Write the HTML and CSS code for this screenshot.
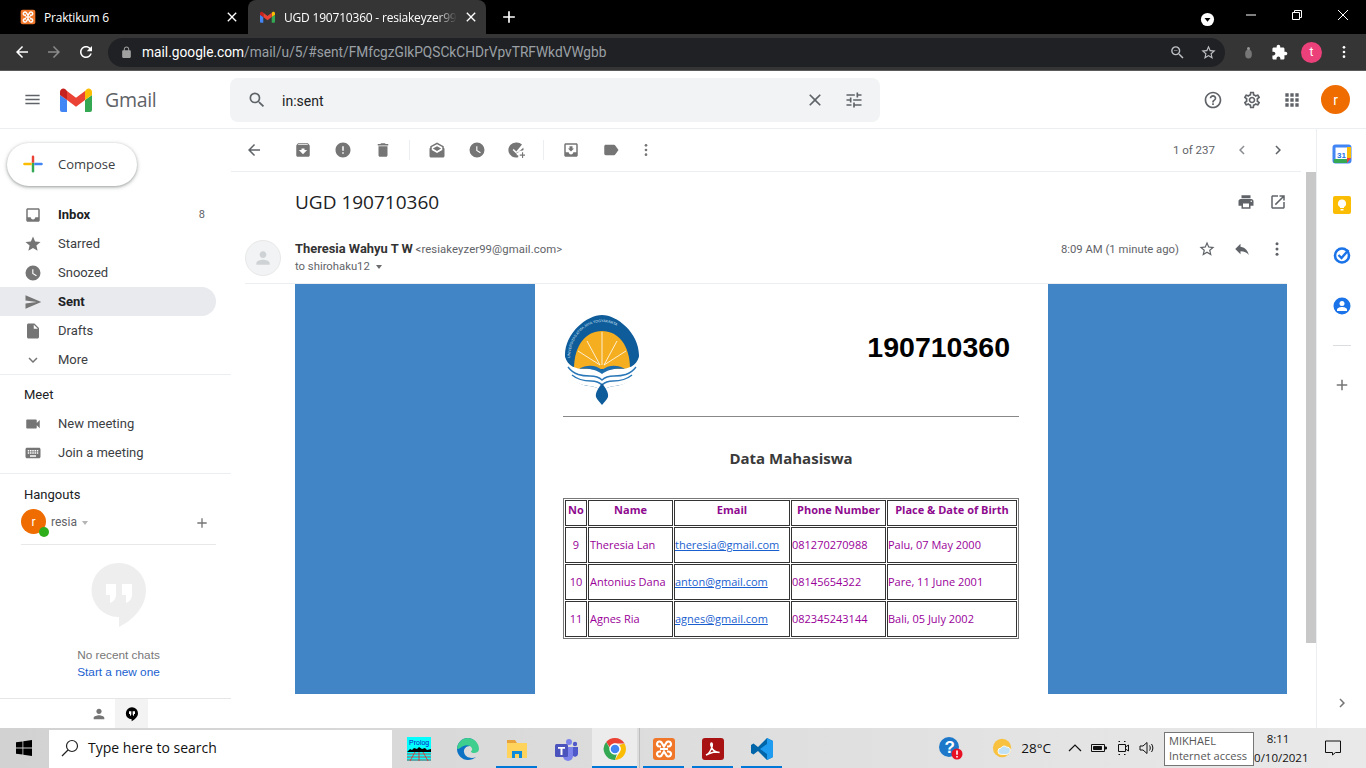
FILE: index.html
```html
<!DOCTYPE html>
<html lang="en">
<head>
  <meta charset="UTF-8">
  <title>UGD 190710360 - Gmail</title>
  <link rel="stylesheet" href="styles.css">
</head>
<body>
  <svg class="defs">
    <symbol id="gmail-m" viewBox="0 0 32 24">
      <path fill="#4285f4" d="M2 24h5V12L0 7v15a2 2 0 0 0 2 2z"/>
      <path fill="#34a853" d="M25 24h5a2 2 0 0 0 2-2V7l-7 5z"/>
      <path fill="#fbbc04" d="M25 3v9l7-5V4c0-2.800-3.200-4.400-5.400-2.700z"/>
      <path fill="#ea4335" d="M7 12V3l9 6.750L25 3v9l-9 6.750z"/>
      <path fill="#c5221f" d="M0 4v3l7 5V3L5.400 1.300C3.200-.4 0 1.200 0 4z"/>
    </symbol>
    <symbol id="xampp" viewBox="0 0 24 24">
      <rect x="1" y="1" width="22" height="22" rx="3" fill="#f0762a"/>
      <path fill="none" stroke="#fff" stroke-width="2.200" d="M9 9.500H7.500a2.500 2.500 0 1 1 2-4l2.500 4 2.500-4a2.500 2.500 0 1 1 2 4H15M9 14.500H7.500a2.500 2.500 0 1 0 2 4l2.500-4 2.500 4a2.500 2.500 0 1 0 2-4H15M8 12h8"/>
    </symbol>
    <symbol id="dots" viewBox="0 0 24 24"><circle cx="12" cy="5" r="2"/><circle cx="12" cy="12" r="2"/><circle cx="12" cy="19" r="2"/></symbol>
    <symbol id="person" viewBox="0 0 24 24"><path d="M12 12c2.210 0 4-1.790 4-4s-1.790-4-4-4-4 1.790-4 4 1.790 4 4 4zm0 2c-2.670 0-8 1.340-8 4v2h16v-2c0-2.660-5.330-4-8-4z"/></symbol>
  </svg>

  <!-- browser chrome -->
  <div class="tabstrip">
    <div class="tab">
      <svg class="favicon"><use href="#xampp"/></svg>
      <span class="tab-title">Praktikum 6</span>
      <svg class="tab-close" viewBox="0 0 24 24"><path d="M19 6.410L17.590 5 12 10.590 6.410 5 5 6.410 10.590 12 5 17.590 6.410 19 12 13.410 17.590 19 19 17.590 13.410 12z"/></svg>
    </div>
    <div class="tab tab-active">
      <svg class="favicon favicon-m"><use href="#gmail-m"/></svg>
      <span class="tab-title tab-fade">UGD 190710360 - resiakeyzer99@gmail.com</span>
      <svg class="tab-close" viewBox="0 0 24 24"><path d="M19 6.410L17.590 5 12 10.590 6.410 5 5 6.410 10.590 12 5 17.590 6.410 19 12 13.410 17.590 19 19 17.590 13.410 12z"/></svg>
    </div>
    <svg class="new-tab" viewBox="0 0 24 24"><path d="M19 13h-6v6h-2v-6H5v-2h6V5h2v6h6v2z"/></svg>
    <div class="window-ctrls">
      <svg class="tab-search" viewBox="0 0 16 16"><circle cx="8" cy="8" r="7" fill="#fff"/><path d="M4.800 6.500h6.400L8 10.500z" fill="#000"/></svg>
      <span class="win-btn"><svg viewBox="0 0 10 10"><path d="M0 5h10" stroke="#fff"/></svg></span>
      <span class="win-btn"><svg viewBox="0 0 10 10" fill="none" stroke="#fff"><path d="M.5 2.500h7v7h-7zM2.500 2.500v-2h7v7h-2"/></svg></span>
      <span class="win-btn"><svg viewBox="0 0 10 10"><path d="M0 0l10 10M10 0L0 10" stroke="#fff"/></svg></span>
    </div>
  </div>

  <div class="browser-bar">
    <svg class="nav-ico" viewBox="0 0 24 24"><path d="M20 11H7.830l5.590-5.590L12 4l-8 8 8 8 1.410-1.410L7.830 13H20v-2z"/></svg>
    <svg class="nav-ico nav-off" viewBox="0 0 24 24"><path d="M12 4l-1.410 1.410L16.170 11H4v2h12.170l-5.580 5.590L12 20l8-8z"/></svg>
    <svg class="nav-ico" viewBox="0 0 24 24"><path d="M17.650 6.350C16.200 4.900 14.210 4 12 4c-4.420 0-7.990 3.580-7.990 8s3.570 8 7.990 8c3.730 0 6.840-2.550 7.730-6h-2.080c-.82 2.330-3.040 4-5.650 4-3.310 0-6-2.690-6-6s2.690-6 6-6c1.660 0 3.140.69 4.220 1.780L13 11h7V4l-2.350 2.350z"/></svg>
    <div class="omnibox">
      <svg class="lock" viewBox="0 0 24 24"><path d="M18 8h-1V6c0-2.760-2.240-5-5-5S7 3.240 7 6v2H6c-1.100 0-2 .9-2 2v10c0 1.100.9 2 2 2h12c1.100 0 2-.9 2-2V10c0-1.100-.9-2-2-2zM15.100 8H8.900V6c0-1.710 1.390-3.100 3.100-3.100 1.710 0 3.100 1.390 3.100 3.100v2z"/></svg>
      <span class="url"><b>mail.google.com</b>/mail/u/5/#sent/FMfcgzGlkPQSCkCHDrVpvTRFWkdVWgbb</span>
      <svg class="omni-ico" viewBox="0 0 24 24"><path d="M15.500 14h-.79l-.28-.27A6.471 6.471 0 0 0 16 9.500 6.500 6.500 0 1 0 9.500 16c1.610 0 3.090-.59 4.230-1.570l.27.28v.79l5 4.990L20.490 19l-4.990-5zm-6 0C7.010 14 5 11.990 5 9.500S7.010 5 9.500 5 14 7.010 14 9.500 11.990 14 9.500 14zM7 9h5v1H7z"/></svg>
      <svg class="omni-ico" viewBox="0 0 24 24"><path d="M22 9.240l-7.190-.62L12 2 9.190 8.630 2 9.240l5.460 4.730L5.820 21 12 17.270 18.180 21l-1.630-7.030L22 9.240zM12 15.400l-3.760 2.270 1-4.280-3.320-2.880 4.380-.38L12 6.100l1.710 4.040 4.380.38-3.320 2.880 1 4.280L12 15.400z"/></svg>
    </div>
    <svg class="ext-bug" viewBox="0 0 12 18"><ellipse cx="6" cy="11" rx="4.500" ry="6" fill="#777"/><circle cx="6" cy="3.500" r="2" fill="#999"/></svg>
    <svg class="ext-ico" viewBox="0 0 24 24"><path d="M20.500 11H19V7c0-1.100-.9-2-2-2h-4V3.500C13 2.120 11.880 1 10.500 1S8 2.120 8 3.500V5H4c-1.100 0-1.990.9-1.990 2v3.800H3.500c1.490 0 2.700 1.210 2.700 2.700s-1.210 2.700-2.700 2.700H2V20c0 1.100.9 2 2 2h3.800v-1.500c0-1.490 1.210-2.700 2.700-2.700 1.490 0 2.700 1.210 2.700 2.700V22H17c1.100 0 2-.9 2-2v-4h1.500c1.380 0 2.500-1.120 2.500-2.500S21.880 11 20.500 11z"/></svg>
    <span class="profile-t">t</span>
    <svg class="ext-dots"><use href="#dots"/></svg>
  </div>

  <!-- gmail header -->
  <header class="gm-header">
    <svg class="gm-menu" viewBox="0 0 24 24"><path d="M3 18h18v-2H3v2zm0-5h18v-2H3v2zm0-7v2h18V6H3z"/></svg>
    <svg class="gm-logo"><use href="#gmail-m"/></svg>
    <span class="gm-word">Gmail</span>
    <div class="searchbar">
      <svg class="ico ico-search" viewBox="0 0 24 24"><path d="M15.500 14h-.79l-.28-.27A6.471 6.471 0 0 0 16 9.500 6.500 6.500 0 1 0 9.500 16c1.610 0 3.090-.59 4.230-1.570l.27.28v.79l5 4.990L20.490 19l-4.990-5zm-6 0C7.010 14 5 11.990 5 9.500S7.010 5 9.500 5 14 7.010 14 9.500 11.990 14 9.500 14z"/></svg>
      <span class="search-text">in:sent</span>
      <svg class="ico ico-clear" viewBox="0 0 24 24"><path d="M19 6.410L17.590 5 12 10.590 6.410 5 5 6.410 10.590 12 5 17.590 6.410 19 12 13.410 17.590 19 19 17.590 13.410 12z"/></svg>
      <svg class="ico ico-tune" viewBox="0 0 24 24"><path d="M3 17v2h6v-2H3zM3 5v2h10V5H3zm10 16v-2h8v-2h-8v-2h-2v6h2zM7 9v2H3v2h4v2h2V9H7zm14 4v-2H11v2h10zm-6-4h2V7h4V5h-4V3h-2v6z"/></svg>
    </div>
    <div class="gm-actions">
      <svg class="ico" viewBox="0 0 24 24"><path d="M11 18h2v-2h-2v2zm1-16C6.480 2 2 6.480 2 12s4.480 10 10 10 10-4.480 10-10S17.520 2 12 2zm0 18c-4.410 0-8-3.590-8-8s3.590-8 8-8 8 3.590 8 8-3.590 8-8 8zm0-14c-2.210 0-4 1.790-4 4h2c0-1.100.9-2 2-2s2 .9 2 2c0 2-3 1.750-3 5h2c0-2.250 3-2.500 3-5 0-2.210-1.790-4-4-4z"/></svg>
      <svg class="ico" viewBox="0 0 24 24"><path d="M19.430 12.980c.04-.32.07-.64.07-.98 0-.34-.03-.66-.07-.98l2.110-1.650c.19-.15.24-.42.12-.64l-2-3.460c-.09-.16-.26-.25-.44-.25-.06 0-.12.01-.17.03l-2.490 1c-.52-.4-1.080-.73-1.690-.98l-.38-2.650C14.460 2.180 14.250 2 14 2h-4c-.25 0-.46.18-.49.42l-.38 2.650c-.61.25-1.170.59-1.690.98l-2.490-1c-.06-.02-.12-.03-.18-.03-.17 0-.34.09-.43.25l-2 3.460c-.13.22-.07.49.12.64l2.110 1.650c-.04.32-.07.65-.07.98 0 .33.03.66.07.98l-2.110 1.650c-.19.15-.24.42-.12.64l2 3.460c.09.16.26.25.44.25.06 0 .12-.01.17-.03l2.490-1c.52.4 1.080.73 1.690.98l.38 2.650c.03.24.24.42.49.42h4c.25 0 .46-.18.49-.42l.38-2.650c.61-.25 1.170-.59 1.690-.98l2.490 1c.06.02.12.03.18.03.17 0 .34-.09.43-.25l2-3.460c.12-.22.07-.49-.12-.64l-2.110-1.650zm-1.980-1.710c.04.31.05.52.05.73 0 .21-.02.43-.05.73l-.14 1.130.89.7 1.080.84-.7 1.210-1.270-.51-1.040-.42-.9.68c-.43.32-.84.56-1.250.73l-1.060.43-.16 1.130-.2 1.350h-1.400l-.19-1.350-.16-1.130-1.060-.43c-.43-.18-.83-.41-1.230-.71l-.91-.7-1.060.43-1.270.51-.7-1.210 1.080-.84.89-.7-.14-1.130c-.03-.31-.05-.54-.05-.74s.02-.43.05-.73l.14-1.130-.89-.7-1.080-.84.7-1.210 1.270.51 1.040.42.9-.68c.43-.32.84-.56 1.250-.73l1.060-.43.16-1.130.2-1.350h1.390l.19 1.350.16 1.130 1.060.43c.43.18.83.41 1.230.71l.91.7 1.060-.43 1.270-.51.7 1.210-1.070.85-.89.7.14 1.130zM12 8c-2.210 0-4 1.790-4 4s1.790 4 4 4 4-1.790 4-4-1.790-4-4-4zm0 6c-1.100 0-2-.9-2-2s.9-2 2-2 2 .9 2 2-.9 2-2 2z"/></svg>
      <svg class="ico" viewBox="0 0 24 24"><path d="M4 8h4V4H4v4zm6 12h4v-4h-4v4zm-6 0h4v-4H4v4zm0-6h4v-4H4v4zm6 0h4v-4h-4v4zm6-10v4h4V4h-4zm-6 4h4V4h-4v4zm6 6h4v-4h-4v4zm0 6h4v-4h-4v4z"/></svg>
      <span class="gm-avatar">r</span>
    </div>
  </header>

  <div class="gm-body">
    <aside class="sidebar">
      <div class="compose">
        <svg class="compose-plus" viewBox="0 0 36 36">
          <path fill="#34a853" d="M16 16h4v14a2 2 0 0 1-4 0z"/>
          <path fill="#4285f4" d="M20 16h12a2 2 0 0 1 0 4H20z"/>
          <path fill="#fbbc04" d="M4 16h12v4H4a2 2 0 0 1 0-4z"/>
          <path fill="#ea4335" d="M16 6a2 2 0 0 1 4 0v10h-4z"/>
        </svg>
        <span>Compose</span>
      </div>

      <nav class="nav-list">
        <div class="nav-row nav-strong">
          <svg viewBox="0 0 24 24"><path d="M19 3H4.990c-1.110 0-1.980.9-1.980 2L3 19c0 1.100.88 2 1.990 2H19c1.100 0 2-.9 2-2V5c0-1.100-.9-2-2-2zm0 12h-4c0 1.660-1.350 3-3 3s-3-1.340-3-3H4.990V5H19v10z"/></svg>
          <span class="nav-label">Inbox</span><span class="nav-count">8</span>
        </div>
        <div class="nav-row">
          <svg viewBox="0 0 24 24"><path d="M12 17.270L18.180 21l-1.640-7.030L22 9.240l-7.190-.61L12 2 9.190 8.630 2 9.240l5.460 4.730L5.820 21z"/></svg>
          <span class="nav-label">Starred</span>
        </div>
        <div class="nav-row">
          <svg viewBox="0 0 24 24"><path d="M12 2a10 10 0 1 0 0 20 10 10 0 0 0 0-20zm4.200 14.200L11 13V7h1.500v5.200l4.500 2.700z"/></svg>
          <span class="nav-label">Snoozed</span>
        </div>
        <div class="nav-row nav-strong nav-current">
          <svg viewBox="0 0 24 24"><path d="M2.010 21L23 12 2.010 3 2 10l15 2-15 2z"/></svg>
          <span class="nav-label">Sent</span>
        </div>
        <div class="nav-row">
          <svg viewBox="0 0 24 24"><path d="M6 2c-1.100 0-1.990.9-1.990 2L4 20c0 1.100.89 2 1.990 2H18c1.100 0 2-.9 2-2V8l-6-6H6zm7 7V3.500L18.500 9H13z"/></svg>
          <span class="nav-label">Drafts</span>
        </div>
        <div class="nav-row">
          <svg viewBox="0 0 24 24"><path d="M16.590 8.590L12 13.170 7.410 8.590 6 10l6 6 6-6z"/></svg>
          <span class="nav-label">More</span>
        </div>
      </nav>

      <section class="meet">
        <div class="side-title">Meet</div>
        <div class="nav-row">
          <svg viewBox="0 0 24 24"><path d="M17 10.500V7c0-.55-.45-1-1-1H4c-.55 0-1 .45-1 1v10c0 .55.45 1 1 1h12c.55 0 1-.45 1-1v-3.500l4 4v-11l-4 4z"/></svg>
          <span class="nav-label">New meeting</span>
        </div>
        <div class="nav-row">
          <svg viewBox="0 0 24 24"><path d="M20 5H4c-1.100 0-1.990.9-1.990 2L2 17c0 1.100.9 2 2 2h16c1.100 0 2-.9 2-2V7c0-1.100-.9-2-2-2zm-9 3h2v2h-2V8zm0 3h2v2h-2v-2zM8 8h2v2H8V8zm0 3h2v2H8v-2zm-1 2H5v-2h2v2zm0-3H5V8h2v2zm9 7H8v-2h8v2zm0-4h-2v-2h2v2zm0-3h-2V8h2v2zm3 3h-2v-2h2v2zm0-3h-2V8h2v2z"/></svg>
          <span class="nav-label">Join a meeting</span>
        </div>
      </section>

      <section class="hangouts">
        <div class="side-title">Hangouts</div>
        <div class="hangouts-user">
          <span class="hg-avatar">r<i class="hg-online"></i></span>
          <span class="hg-name">resia</span>
          <i class="hg-caret"></i>
          <svg class="hg-add" viewBox="0 0 24 24"><path d="M19 13h-6v6h-2v-6H5v-2h6V5h2v6h6v2z"/></svg>
        </div>
        <div class="hg-empty">
          <svg class="hg-bubble" viewBox="0 0 56 66">
            <path fill="#eee" d="M28 1a27 27 0 0 0-1 54h1v10c14-7 27-20 27-37A27 27 0 0 0 28 1z"/>
            <path fill="#fff" d="M15 22h10v11c0 4-3 7-6 8v-8h-4zM31 22h10v11c0 4-3 7-6 8v-8h-4z"/>
          </svg>
          <div class="hg-none">No recent chats</div>
          <div class="hg-start">Start a new one</div>
        </div>
      </section>

      <div class="side-tabs">
        <span class="side-tab"><svg viewBox="0 0 24 24"><use href="#person"/></svg></span>
        <span class="side-tab side-tab-on">
          <svg viewBox="0 0 24 24"><path d="M12 2a9 9 0 0 0-.5 18v3c5-2.500 9.500-7 9.500-12a9 9 0 0 0-9-9z"/><path fill="#fff" d="M7.500 8h3.500v4c0 1.500-1 2.500-2 3v-3H7.500zM13 8h3.500v4H15v3c-1-.5-2-1.500-2-3z"/></svg>
        </span>
      </div>
    </aside>

    <main class="content">
      <div class="mail-toolbar">
        <span class="tool tool-back"><svg viewBox="0 0 24 24"><path d="M20 11H7.830l5.590-5.590L12 4l-8 8 8 8 1.410-1.410L7.830 13H20v-2z"/></svg></span>
        <span class="tool"><svg viewBox="0 0 24 24"><path d="M20.540 5.230l-1.390-1.680C18.880 3.210 18.470 3 18 3H6c-.47 0-.88.21-1.160.55L3.460 5.230C3.170 5.570 3 6.020 3 6.500V19c0 1.100.9 2 2 2h14c1.100 0 2-.9 2-2V6.500c0-.48-.17-.93-.46-1.270zM12 17.500L6.500 12H10v-2h4v2h3.500L12 17.500zM5.120 5l.81-1h12l.94 1H5.120z"/></svg></span>
        <span class="tool"><svg viewBox="0 0 24 24"><path d="M12 2C6.480 2 2 6.480 2 12s4.480 10 10 10 10-4.480 10-10S17.520 2 12 2zm1 15h-2v-2h2v2zm0-4h-2V7h2v6z"/></svg></span>
        <span class="tool"><svg viewBox="0 0 24 24"><path d="M6 19c0 1.100.9 2 2 2h8c1.100 0 2-.9 2-2V7H6v12zM19 4h-3.500l-1-1h-5l-1 1H5v2h14V4z"/></svg></span>
        <i class="tool-sep"></i>
        <span class="tool"><svg viewBox="0 0 24 24"><path d="M12 2L3 7v2l-1 1v10c0 1.100.9 2 2 2h16c1.100 0 2-.9 2-2V10l-1-1V7l-9-5zm0 2.300L19 8v4l-7 4-7-4V8l7-3.700zM6.500 10l5.500 3.200 5.500-3.200L12 7z"/></svg></span>
        <span class="tool"><svg viewBox="0 0 24 24"><path d="M12 2a10 10 0 1 0 0 20 10 10 0 0 0 0-20zm4.200 14.200L11 13V7h1.500v5.200l4.500 2.700z"/></svg></span>
        <span class="tool"><svg viewBox="0 0 24 24"><path d="M12 2a10 10 0 1 0 3 19.500V19h-2v-4h3v-2h3c1-.1 2.300-.2 3-1 .1-1 0-2-.3-3l-9.200 8-5-5 1.400-1.400 3.500 3.500L20 4.800A10 10 0 0 0 12 2zM20 15v3h-3v1.500h3v3h1.500v-3h2.500V18h-2.500v-3z"/></svg></span>
        <i class="tool-sep"></i>
        <span class="tool"><svg viewBox="0 0 24 24"><path d="M19 3H4.990c-1.110 0-1.980.9-1.980 2L3 19c0 1.100.88 2 1.990 2H19c1.100 0 2-.9 2-2V5c0-1.100-.9-2-2-2zm0 12h-4c0 1.660-1.350 3-3 3s-3-1.340-3-3H4.990V5H19v10zm-3-5h-2V7h-4v3H8l4 4 4-4z"/></svg></span>
        <span class="tool"><svg viewBox="0 0 24 24"><path d="M17.630 5.840C17.270 5.330 16.670 5 16 5L5 5.010C3.900 5.010 3 5.900 3 7v10c0 1.100.9 1.990 2 1.990L16 19c.67 0 1.270-.33 1.630-.84L22 12l-4.370-6.160z"/></svg></span>
        <span class="tool tool-more"><svg><use href="#dots"/></svg></span>
        <span class="pager">1 of 237</span>
        <span class="pager-btn"><svg viewBox="0 0 24 24"><path d="M15.410 7.410L14 6l-6 6 6 6 1.410-1.410L10.830 12z"/></svg></span>
        <span class="pager-btn pager-next"><svg viewBox="0 0 24 24"><path d="M10 6L8.590 7.410 13.170 12l-4.580 4.590L10 18l6-6z"/></svg></span>
      </div>

      <div class="mail-scroll">
        <div class="mail">
          <div class="subject-row">
            <h1 class="subject">UGD 190710360</h1>
            <svg class="ico subject-ico" viewBox="0 0 24 24"><path d="M19 8H5c-1.660 0-3 1.340-3 3v6h4v4h12v-4h4v-6c0-1.660-1.340-3-3-3zm-3 11H8v-5h8v5zm3-7c-.55 0-1-.45-1-1s.45-1 1-1 1 .45 1 1-.45 1-1 1zm-1-9H6v4h12V3z"/></svg>
            <svg class="ico subject-ico" viewBox="0 0 24 24"><path d="M19 19H5V5h7V3H5c-1.110 0-2 .9-2 2v14c0 1.100.89 2 2 2h14c1.100 0 2-.9 2-2v-7h-2v7zM14 3v2h3.590l-9.830 9.830 1.410 1.410L19 6.410V10h2V3h-7z"/></svg>
          </div>

          <div class="msg-head">
            <span class="sender-pic"><svg viewBox="0 0 24 24"><use href="#person"/></svg></span>
            <div class="msg-who">
              <div><b class="sender">Theresia Wahyu T W</b> <span class="sender-mail">&lt;resiakeyzer99@gmail.com&gt;</span></div>
              <div class="msg-to">to shirohaku12 <i class="to-caret"></i></div>
            </div>
            <div class="msg-meta">
              <span class="msg-time">8:09 AM (1 minute ago)</span>
              <svg class="ico" viewBox="0 0 24 24"><path d="M22 9.240l-7.190-.62L12 2 9.190 8.630 2 9.240l5.460 4.730L5.820 21 12 17.270 18.180 21l-1.630-7.030L22 9.240zM12 15.400l-3.760 2.270 1-4.280-3.320-2.880 4.380-.38L12 6.100l1.710 4.040 4.380.38-3.320 2.880 1 4.280L12 15.400z"/></svg>
              <svg class="ico" viewBox="0 0 24 24"><path d="M10 9V5l-7 7 7 7v-4.100c5 0 8.500 1.600 11 5.100-1-5-4-10-11-11z"/></svg>
              <svg class="ico"><use href="#dots"/></svg>
            </div>
          </div>

          <div class="mail-banner">
            <div class="mail-card">
              <div class="card-top">
                <svg class="uni-logo" viewBox="0 0 74 90">
                  <path fill="#0f5c9b" d="M37 0C22 0 0 18 0 40c0 18 10 30 24 31 6 0 8 3 13 3s7-3 13-3c14-1 24-13 24-31C74 18 52 0 37 0z"/>
                  <path fill="none" id="uni-arc" d="M5 44C5 22 20 7 37 7s32 15 32 37"/>
                  <text class="uni-text"><textPath href="#uni-arc" startOffset="1">UNIVERSITAS ATMA JAYA YOGYAKARTA</textPath></text>
                  <path fill="#f4ae20" d="M9 54C9 30 21 16 37 16s28 14 28 38z"/>
                  <path stroke="#fff" stroke-width=".8" d="M37 50V17M35 50L22 26M39 50L52 26M35 50L13 36M39 50L61 36"/>
                  <path fill="#fff" d="M0 42c3 9 10 12 20 12 8 0 13 0 17 3 4-3 9-3 17-3 10 0 17-3 20-12v8c-2 13-12 20-24 21-6 0-8 3-13 3s-7-3-13-3C12 70 2 63 0 50z"/>
                  <path fill="#1d6cab" d="M14 54c8-5 17-4 23 1 6-5 15-6 23-1-9-1-17 0-23 5-6-5-14-6-23-5z"/>
                  <path fill="none" stroke="#2b78b8" stroke-width="1.400" d="M3 52c6 8 14 9 22 9 5 0 9 1 12 4 3-3 7-4 12-4 8 0 16-1 22-9M7 60c6 5 12 6 19 6 5 0 8 1 11 4 3-3 6-4 11-4 7 0 13-1 19-6"/>
                  <path fill="#0f5c9b" d="M37 68c-3 5-7 9-6 14 1 3 4 5 6 8 2-3 5-5 6-8 1-5-3-9-6-14z"/>
                </svg>
                <div class="card-nim">190710360</div>
              </div>
              <hr class="card-line">
              <h2 class="card-title">Data Mahasiswa</h2>
              <table class="data-table">
                <colgroup>
                  <col class="col-no"><col class="col-name"><col class="col-mail"><col class="col-phone"><col class="col-born">
                </colgroup>
                <tr class="head-row"><th>No</th><th>Name</th><th>Email</th><th>Phone Number</th><th>Place &amp; Date of Birth</th></tr>
                <tr><td class="num">9</td><td class="who">Theresia Lan</td><td><a href="#">theresia@gmail.com</a></td><td>081270270988</td><td>Palu, 07 May 2000</td></tr>
                <tr><td class="num">10</td><td class="who">Antonius Dana</td><td><a href="#">anton@gmail.com</a></td><td>08145654322</td><td>Pare, 11 June 2001</td></tr>
                <tr><td class="num">11</td><td class="who">Agnes Ria</td><td><a href="#">agnes@gmail.com</a></td><td>082345243144</td><td>Bali, 05 July 2002</td></tr>
              </table>
            </div>
          </div>
        </div>
        <div class="scrollbar"><div class="scroll-thumb"></div></div>
      </div>
    </main>

    <aside class="rail">
      <svg class="rail-ico" viewBox="0 0 20 20">
        <rect x="2" y="2" width="16" height="16" rx="1.500" fill="#fff" stroke="#4285f4" stroke-width="3"/>
        <path fill="#fbbc04" d="M15 3h4v11h-4z"/><path fill="#34a853" d="M2 15h13v4H3a1.500 1.500 0 0 1-1.500-1.500z"/><path fill="#ea4335" d="M15 14h4l-4 5z"/>
        <text x="5" y="13.500" class="cal-num">31</text>
      </svg>
      <svg class="rail-ico" viewBox="0 0 20 20">
        <rect x="1" y="1" width="18" height="18" rx="2" fill="#fbbc04"/>
        <path fill="#fff" d="M10 4.500a4 4 0 0 0-2 7.500v1h4v-1a4 4 0 0 0-2-7.500zM8.500 14h3v1.500h-3z"/>
      </svg>
      <svg class="rail-ico" viewBox="0 0 20 20">
        <circle cx="10" cy="10.500" r="7" fill="none" stroke="#1a73e8" stroke-width="2.600"/>
        <path fill="none" stroke="#1a73e8" stroke-width="2.400" d="M6.500 10l3 3 7-8"/>
      </svg>
      <svg class="rail-ico" viewBox="0 0 20 20">
        <circle cx="10" cy="10" r="8.500" fill="#1a73e8"/>
        <circle cx="10" cy="7.500" r="2.500" fill="#fff"/><path fill="#fff" d="M5 13.500c0-1.700 3-2.600 5-2.600s5 .9 5 2.600V15H5z"/>
      </svg>
      <hr class="rail-line">
      <svg class="rail-plus" viewBox="0 0 24 24"><path d="M19 13h-6v6h-2v-6H5v-2h6V5h2v6h6v2z"/></svg>
      <svg class="rail-chev" viewBox="0 0 24 24"><path d="M10 6L8.590 7.410 13.170 12l-4.580 4.590L10 18l6-6z"/></svg>
    </aside>
  </div>

  <!-- windows taskbar -->
  <footer class="taskbar">
    <svg class="win-logo" viewBox="0 0 16 16"><path d="M0 2.300l6.500-.9v6.200H0zM7.300 1.300L16 0v7.600H7.300zM0 8.400h6.500v6.200L0 13.700zM7.300 8.400H16V16l-8.700-1.300z"/></svg>
    <div class="win-search">
      <svg viewBox="0 0 18 18" fill="none" stroke="#222" stroke-width="1.200"><circle cx="11" cy="7" r="5.500"/><path d="M7 11l-6 6"/></svg>
      <span>Type here to search</span>
    </div>
    <div class="task-apps">
      <span class="task-app">
        <svg viewBox="0 0 24 24">
          <rect width="24" height="24" fill="#0ff"/>
          <text x="2" y="8" class="prolog-text">Prolog</text>
          <path fill="#000" d="M0 15l3-3 2 1 2-2 3 1 2-2 3 2 3-1 2 2 4-1v3H0z"/>
          <path stroke="#e22" stroke-width=".8" fill="none" d="M0 17h24M0 20h24M0 23h24M8 15L3 24M12 15v9M16 15l5 9"/>
        </svg>
      </span>
      <span class="task-app">
        <svg viewBox="0 0 24 24">
          <path fill="#0c73c4" d="M12 1a11 11 0 0 0-11 11c0 6 5 11 11 11 3 0 6-1 8-3-4 2-11 1-12-5-.5-3 2-6 6-6 3 0 5 2 5 4h3c0-7-4-12-10-12z"/>
          <path fill="#3ecf8e" d="M12 1c6 0 11 5 11 11 0 3-3 4.500-6 4-1.500-.3-2-1-2-2 1.500-.5 1.500-2 .5-3.500-1.500-2.300-5-3-8-1.500-2.500 1.200-5 4-6.500 2.500C1.500 6 6 1 12 1z"/>
        </svg>
      </span>
      <span class="task-app task-open">
        <svg viewBox="0 0 24 24">
          <path fill="#e8a33c" d="M2 3h8l2 3H2z"/><path fill="#ffd35c" d="M2 6h20v15H2z"/>
          <path fill="#0f8bdb" d="M7 21v-7h10v7h-3v-4h-4v4z"/>
        </svg>
      </span>
      <span class="task-app">
        <svg viewBox="0 0 24 24">
          <circle cx="15" cy="5" r="3" fill="#7b83eb"/><circle cx="21" cy="7" r="2.200" fill="#5059c9"/>
          <path fill="#5059c9" d="M18 10h6v7a3 3 0 0 1-5 2z"/><path fill="#7b83eb" d="M9 10h10v9a5 5 0 0 1-10 0z"/>
          <rect x="1" y="7" width="13" height="13" rx="1.500" fill="#4b53bc"/>
          <path fill="#fff" d="M4 10h7v1.800H8.500V18h-2v-6.200H4z"/>
        </svg>
      </span>
      <span class="task-app task-open task-active">
        <svg viewBox="0 0 24 24">
          <path fill="#ea4335" d="M12 1a11 11 0 0 1 9.500 5.500H12a5.500 5.500 0 0 0-5.200 3.700L3.200 5A11 11 0 0 1 12 1z"/>
          <path fill="#fbbc04" d="M21.500 6.500A11 11 0 0 1 12 23l4.700-8.200A5.500 5.500 0 0 0 16 8z"/>
          <path fill="#34a853" d="M12 23A11 11 0 0 1 3.200 5l4.700 8.200a5.500 5.500 0 0 0 6 3.500z"/>
          <circle cx="12" cy="12" r="5" fill="#4285f4" stroke="#fff" stroke-width="1.400"/>
        </svg>
      </span>
      <i class="task-sep"></i>
      <span class="task-app task-open"><svg><use href="#xampp"/></svg></span>
      <span class="task-app task-open">
        <svg viewBox="0 0 24 24">
          <rect x="1" y="1" width="22" height="22" rx="3" fill="#a81212"/>
          <path fill="none" stroke="#fff" stroke-width="1.500" d="M5 18c3-1 5-5 6-8 .5-2 .5-4-.5-4s-1 2 0 4c1 3 3 5 8 5.500-3-1-7 0-10 1-1 .5-2.500 1-3.500 1.500z"/>
        </svg>
      </span>
      <span class="task-app task-open">
        <svg viewBox="0 0 24 24">
          <path fill="#0065a9" d="M17 1L8 10 3.500 6.500 1 8v8l2.500 1.500L8 14l9 9 6-3V4z"/>
          <path fill="#1f9cf0" d="M17 1l6 3v16l-6 3V7l-7 5 7 5z"/>
        </svg>
      </span>
    </div>
    <div class="tray">
      <svg class="tray-help" viewBox="0 0 24 24">
        <circle cx="10" cy="11" r="10" fill="#1d78c9"/>
        <text x="5.500" y="17" class="help-mark">?</text>
        <circle cx="18" cy="18" r="5.500" fill="#e81123"/><path stroke="#fff" stroke-width="1.600" d="M18 14.500v4.200M18 20v1.500"/>
      </svg>
      <svg class="tray-weather" viewBox="0 0 24 24">
        <circle cx="11" cy="12" r="10" fill="#f8c140"/>
        <path fill="#bfe0f5" stroke="#fff" d="M10 19a3.500 3.500 0 0 1 0-7c.8-2 4-3 6-1 2 0 4 1 4 3s-1 5-4 5z"/>
      </svg>
      <span class="tray-temp">28°C</span>
      <svg class="tray-ico" viewBox="0 0 16 16" fill="none" stroke="#111" stroke-width="1.200"><path d="M2 11l6-6 6 6"/></svg>
      <svg class="tray-ico" viewBox="0 0 16 16" fill="none" stroke="#111"><path d="M.5 4.500h13v7H.5z"/><path fill="#111" d="M2.500 6.500h8v3h-8zM14 7h1.500v2H14z"/></svg>
      <svg class="tray-ico" viewBox="0 0 16 16" fill="none" stroke="#111"><path d="M3.500 1.500H5M9 1.500h1.500M3.500 14.500H5M9 14.500h1.500M3.500 4.500h7v7h-7zM10.500 7l3-2v6l-3-2"/></svg>
      <svg class="tray-ico" viewBox="0 0 16 16" fill="none" stroke="#111"><path d="M1 6h3l4-3.500v11L4 10H1zM10.500 5.500c1 1.500 1 3.500 0 5M12.500 4c1.800 2.400 1.800 5.600 0 8"/></svg>
      <div class="clock"><span>8:11</span><span>10/10/2021</span></div>
      <svg class="notify" viewBox="0 0 18 18" fill="none" stroke="#111"><path d="M1.500 2h15v11.500h-5L8.500 16v-2.500h-7z"/></svg>
    </div>
    <div class="tray-tip"><div>MIKHAEL</div><div>Internet access</div></div>
  </footer>
</body>
</html>
```

FILE: styles.css
```css
* { box-sizing: border-box; }
html, body {
  height: 100%;
}
body {
  margin: 0;
  width: 1366px;
  height: 768px;
  overflow: hidden;
  display: flex;
  flex-direction: column;
  font-family: 'Roboto', sans-serif;
  background-color: white;
  color: #202124;
}
svg { display: block; flex: none; }
.defs { display: none; }

/* browser */
.tabstrip {
  height: 34px;
  background-color: #000;
  display: flex;
  align-items: flex-end;
  color: white;
  padding-left: 8px;
}
.tab {
  width: 239px;
  height: 34px;
  display: flex;
  align-items: center;
  padding: 0 7px 0 12px;
  font-family: 'Open Sans', sans-serif;
  font-size: 12px;
}
.tab-active {
  background-color: #353535;
  border-radius: 8px 8px 0 0;
  width: 238px;
  margin-left: 1px;
}
.favicon { width: 16px; height: 16px; margin-right: 8px; }
.favicon-m { width: 15px; height: 12px; margin-right: 9px; }
.tab-title {
  flex: 1;
  overflow: hidden;
  white-space: nowrap;
  letter-spacing: -0.2px;
}
.tab-fade {
  -webkit-mask-image: linear-gradient(90deg, #000 88%, transparent 100%);
  mask-image: linear-gradient(90deg, #000 88%, transparent 100%);
}
.tab-close { width: 16px; height: 16px; fill: white; margin-left: 6px; }
.new-tab { width: 20px; height: 20px; fill: white; margin: 0 0 7px 13px; }
.window-ctrls {
  margin-left: auto;
  height: 34px;
  display: flex;
  align-items: center;
}
.tab-search { width: 15px; height: 15px; margin: 5px 13px 0 0; }
.win-btn {
  width: 46px;
  height: 30px;
  margin-bottom: 4px;
  display: flex;
  align-items: center;
  justify-content: center;
}
.win-btn svg { width: 10px; height: 10px; }

.browser-bar {
  height: 37px;
  background-color: #353535;
  border-bottom: 1px solid #5a5a5a;
  display: flex;
  align-items: center;
  padding-left: 13px;
}
.nav-ico { width: 18px; height: 18px; fill: white; margin-right: 14px; }
.nav-off { fill: #8a8a8a; }
.omnibox {
  width: 1117px;
  height: 29px;
  margin-left: -1px;
  background-color: #202124;
  border-radius: 15px;
  display: flex;
  align-items: center;
  padding: 0 8px 0 12px;
}
.lock { width: 13px; height: 13px; fill: #a0a0a0; }
.url {
  flex: 1;
  margin-left: 9px;
  font-size: 13.730px;
  color: #9aa0a6;
  white-space: nowrap;
}
.url b { font-weight: 400; color: white; }
.omni-ico { width: 17px; height: 17px; fill: #bdc1c6; margin-left: 14px; }
.ext-bug { width: 9px; height: 15px; margin-left: 19px; }
.ext-ico { width: 17px; height: 17px; fill: white; margin-left: 18px; }
.profile-t {
  width: 21px;
  height: 21px;
  margin-left: 13px;
  border-radius: 50%;
  background-color: #ec407a;
  color: white;
  font-size: 12px;
  display: flex;
  align-items: center;
  justify-content: center;
}
.ext-dots { width: 16px; height: 16px; fill: white; margin-left: 14px; }

/* gmail header */
.gm-header {
  height: 58px;
  border-bottom: 1px solid #eceff1;
  display: flex;
  align-items: center;
  padding-left: 23px;
  flex: none;
}
.ico { width: 20px; height: 20px; fill: #5f6368; }
.gm-menu { width: 19px; height: 19px; fill: #5f6368; }
.gm-logo { width: 32px; height: 24px; margin-left: 18px; }
.gm-word {
  margin-left: 13px;
  width: 125px;
  font-family: 'Open Sans', sans-serif;
  font-size: 19.500px;
  color: #5f6368;
  letter-spacing: -0.3px;
}
.searchbar {
  width: 650px;
  height: 44px;
  background-color: #f1f3f4;
  border-radius: 8px;
  display: flex;
  align-items: center;
  padding: 0 16px 0 17px;
}
.search-text { flex: 1; margin-left: 15px; padding-top: 2px; font-size: 14px; }
.ico-clear { margin-right: 19px; }
.gm-actions {
  margin-left: auto;
  display: flex;
  align-items: center;
  gap: 19.500px;
  padding-right: 16px;
}
.gm-avatar {
  width: 29px;
  height: 29px;
  border-radius: 50%;
  background-color: #ef6c00;
  color: white;
  font-size: 14px;
  display: flex;
  align-items: center;
  justify-content: center;
}

.gm-body {
  flex: 1;
  display: flex;
  min-height: 0;
}

/* left side */
.sidebar {
  width: 231px;
  flex: none;
  display: flex;
  flex-direction: column;
}
.compose {
  width: 130px;
  height: 43px;
  margin: 14px 0 14px 7px;
  border-radius: 22px;
  background-color: white;
  box-shadow: 0 1px 3px rgba(60, 64, 67, 0.4), 0 1px 5px rgba(60, 64, 67, 0.2);
  display: flex;
  align-items: center;
  padding: 0 0 2px 15px;
  font-family: 'Open Sans', sans-serif;
  font-size: 13px;
  color: #3c4043;
}
.compose-plus { width: 22px; height: 22px; margin-right: 14px; }
.nav-list { border-bottom: 1px solid #eceff1; width: 231px; }
.nav-row {
  width: 216px;
  height: 29px;
  display: flex;
  align-items: center;
  padding-left: 24px;
  font-size: 13px;
  color: #3c4043;
  border-radius: 0 15px 15px 0;
}
.nav-row svg { width: 18px; height: 18px; fill: #757575; margin-right: 16px; }
.nav-label { flex: 1; }
.nav-count { font-size: 11px; font-weight: 400; color: #5f6368; margin-right: 11px; }
.nav-strong { font-weight: 700; color: #202124; }
.nav-current { background-color: #e8eaed; }
.meet {
  height: 99px;
  border-bottom: 1px solid #eceff1;
  padding-top: 11px;
}
.side-title {
  padding-left: 24px;
  font-size: 13px;
  line-height: 18px;
  color: #202124;
  margin-bottom: 5px;
}
.hangouts { padding-top: 12px; flex: 1; }
.hangouts-user {
  width: 195px;
  height: 36px;
  margin-left: 21px;
  border-bottom: 1px solid #e8e8e8;
  display: flex;
  align-items: flex-start;
}
.hg-avatar {
  position: relative;
  width: 25px;
  height: 25px;
  border-radius: 50%;
  background-color: #ef6c00;
  color: white;
  font-size: 12px;
  display: flex;
  align-items: center;
  justify-content: center;
}
.hg-online {
  position: absolute;
  right: -3px;
  bottom: -3px;
  width: 10px;
  height: 10px;
  border-radius: 50%;
  background-color: #2fae1c;
}
.hg-name { margin: 6px 0 0 5px; font-size: 12px; color: #5f6368; }
.hg-caret {
  margin: 12px 0 0 5px;
  border-left: 3.500px solid transparent;
  border-right: 3.500px solid transparent;
  border-top: 4px solid #b5b5b5;
}
.hg-add { width: 16px; height: 16px; fill: #757575; margin: 6px 6px 0 auto; }
.hg-empty {
  padding-top: 17px;
  text-align: center;
  width: 195px;
  margin-left: 21px;
  font-family: 'Liberation Sans', sans-serif;
  font-size: 11.800px;
  line-height: 17px;
}
.hg-bubble { width: 56px; height: 66px; margin: 0 auto 19px; }
.hg-none { color: #777; }
.hg-start { color: #1a5fd0; }
.side-tabs {
  height: 30px;
  border-top: 1px solid #e6e6e6;
  display: flex;
  padding-left: 82px;
}
.side-tab {
  width: 33px;
  display: flex;
  align-items: center;
  justify-content: center;
}
.side-tab svg { width: 16px; height: 16px; fill: #757575; }
.side-tab-on { background-color: #f3f3f3; }
.side-tab-on svg { fill: #000; }

/* mail column */
.content {
  width: 1085px;
  flex: none;
  display: flex;
  flex-direction: column;
}
.mail-toolbar {
  width: 1070px;
  height: 43px;
  flex: none;
  border-bottom: 1px solid #eceff1;
  display: flex;
  align-items: center;
  padding-left: 3px;
  font-size: 11.500px;
  color: #5f6368;
}
.tool {
  width: 39.600px;
  display: flex;
  justify-content: center;
}
.tool svg { width: 18px; height: 18px; fill: #757575; }
.tool-back { margin-right: 10px; }
.tool-back svg { fill: #5f6368; }
.tool-more { width: 32px; }
.tool-more svg { width: 16px; height: 16px; }
.tool-sep {
  width: 1px;
  height: 20px;
  background-color: #eceff1;
  margin: 0 7px 0 7px;
}
.pager { margin-left: auto; margin-right: 18px; }
.pager-btn svg { width: 18px; height: 18px; fill: #8a8d91; }
.pager-next { margin: 0 14px 0 18px; }
.pager-next svg { fill: #5f6368; }

.mail-scroll {
  flex: 1;
  display: flex;
  min-height: 0;
}
.mail { width: 1075px; flex: none; padding-left: 14px; }
.scrollbar { width: 10px; flex: none; }
.scroll-thumb { height: 471px; background-color: #c8c8c8; }

.subject-row {
  height: 60px;
  padding-left: 50px;
  display: flex;
  align-items: center;
}
.subject {
  flex: 1;
  margin: 0;
  font-family: 'Open Sans', sans-serif;
  font-weight: 400;
  font-size: 19px;
  color: #202124;
}
.subject-ico { width: 18px; height: 18px; margin-right: 14px; }
.subject-ico:last-child { margin-right: 19px; }
.msg-head {
  height: 52px;
  display: flex;
  align-items: flex-start;
  padding-top: 8px;
  border-bottom: 1px solid #eceff1;
  width: 1042px;
}
.sender-pic {
  width: 36px;
  height: 36px;
  border-radius: 50%;
  background-color: #f1f3f4;
  border: 1px solid #e8e8e8;
  display: flex;
  align-items: center;
  justify-content: center;
}
.sender-pic svg { width: 20px; height: 20px; fill: #cfd2d4; }
.msg-who { margin-left: 14px; flex: 1; font-size: 11.300px; color: #5f6368; padding-top: 1px; }
.sender { font-size: 12.900px; color: #333; }
.sender-mail { letter-spacing: 0.1px; }
.msg-to { margin-top: 4px; }
.to-caret {
  display: inline-block;
  vertical-align: middle;
  margin-left: 3px;
  border-left: 3.500px solid transparent;
  border-right: 3.500px solid transparent;
  border-top: 4px solid #6b6b6b;
}
.msg-meta {
  display: flex;
  align-items: center;
  font-size: 11.300px;
  color: #5f6368;
}
.msg-time { margin-right: 19px; }
.msg-meta .ico { width: 18px; height: 18px; margin-right: 17px; }
.msg-meta .ico:last-child { margin-right: 1px; }
.mail-banner {
  width: 992px;
  height: 410px;
  margin-left: 50px;
  background-color: #4285c7;
  display: flex;
  justify-content: center;
}
.mail-card {
  width: 513px;
  margin-left: 1px;
  height: 410px;
  background-color: white;
  padding: 31px 29px 0 28px;
}
.card-top {
  height: 90px;
  display: flex;
  padding-left: 2px;
}
.uni-logo { width: 74px; height: 90px; }
.uni-text { font-family: 'Liberation Sans', sans-serif; font-size: 3.600px; fill: #d7e8f5; }
.card-nim {
  margin-left: auto;
  margin-right: 9px;
  padding-top: 12px;
  font-family: 'Liberation Sans', sans-serif;
  font-weight: 700;
  font-size: 28.500px;
  line-height: 40px;
  color: #000;
}
.card-line {
  margin: 11px 0 0;
  border: 0;
  height: 1px;
  background-color: #888;
}
.card-title {
  margin: 31px 0 30px;
  text-align: center;
  font-family: 'Open Sans', sans-serif;
  font-weight: 700;
  font-size: 15px;
  line-height: 20px;
  color: #3a3a3a;
}
.data-table {
  width: 456px;
  table-layout: fixed;
  border: 1px solid #777;
  border-collapse: separate;
  border-spacing: 1px;
  font-family: 'Open Sans', sans-serif;
  font-size: 11px;
  color: #990099;
}
.col-no { width: 22px; }
.col-name { width: 85px; }
.col-mail { width: 116px; }
.col-phone { width: 95px; }
.col-born { width: 130px; }
.data-table th, .data-table td {
  border: 1px solid #333;
  padding: 0 0 2px;
  height: 36px;
  white-space: nowrap;
  overflow: hidden;
}
.data-table th { height: 26px; padding-bottom: 8px; font-weight: 700; color: #8e0a8e; }
.data-table .num { text-align: center; }
.data-table .who { padding-left: 1px; }
.data-table a { color: #1a5fd0; }

/* right rail */
.rail {
  width: 50px;
  flex: none;
  border-left: 1px solid #eceff1;
  display: flex;
  flex-direction: column;
  align-items: center;
  padding-top: 15px;
}
.rail-ico { width: 20px; height: 20px; margin-bottom: 30.500px; }
.cal-num { font-family: 'Liberation Sans', sans-serif; font-size: 8px; fill: #1a73e8; font-weight: 700; }
.rail-line { width: 18px; border: 0; height: 1px; background-color: #dadce0; margin: -1px 0 30px; }
.rail-plus { width: 18px; height: 18px; fill: #757575; }
.rail-chev { width: 18px; height: 18px; fill: #757575; margin-top: auto; margin-bottom: 16px; }

/* taskbar */
.taskbar {
  position: relative;
  height: 40px;
  flex: none;
  background: linear-gradient(90deg, #d2d2d2 0%, #dcdcdc 45%, #e9e9e9 100%);
  display: flex;
  align-items: center;
  font-family: 'Open Sans', sans-serif;
  color: #111;
}
.win-logo { width: 16px; height: 16px; margin-left: 16px; fill: #000; }
.win-search {
  width: 343px;
  height: 38px;
  margin: 2px 0 0 17px;
  background-color: white;
  display: flex;
  align-items: center;
  padding: 0 0 3px 12px;
  font-size: 14px;
}
.win-search svg { width: 18px; height: 18px; margin-right: 9px; }
.task-apps {
  display: flex;
  height: 40px;
  padding-left: 2px;
}
.task-app {
  width: 41px;
  height: 40px;
  margin: 0 4px;
  display: flex;
  align-items: center;
  justify-content: center;
  padding-top: 1px;
}
.task-app svg { width: 24px; height: 24px; }
.task-open { box-shadow: inset 0 -2px 0 #0078d7; }
.task-active { width: 45px; margin: 0 2px; background-color: #ececec; }
.task-sep { width: 1px; height: 40px; background-color: #bdbdbd; margin: 0 -0.5px; }
.prolog-text { font-family: 'Liberation Sans', sans-serif; font-size: 7px; fill: #1010c0; }
.tray {
  margin-left: auto;
  height: 40px;
  display: flex;
  align-items: center;
  font-size: 13.500px;
  padding-right: 24px;
}
.tray-help { width: 24px; height: 24px; margin-right: 29px; }
.help-mark { font-family: 'Liberation Sans', sans-serif; font-weight: 700; font-size: 17px; fill: #fff; }
.tray-weather { width: 22px; height: 22px; }
.tray-temp { margin: 0 16px 0 7px; }
.tray-ico { width: 16px; height: 16px; margin-right: 8px; }
.clock {
  width: 60px;
  margin: 0 16px 0 85px;
  display: flex;
  flex-direction: column;
  align-items: center;
  font-size: 11.500px;
  line-height: 19px;
  white-space: nowrap;
}
.notify { width: 18px; height: 18px; }
.tray-tip {
  position: absolute;
  left: 1164px;
  top: 4px;
  width: 90px;
  height: 34px;
  background-color: white;
  border: 1px solid #767676;
  padding: 0 0 0 4px;
  font-size: 11.100px;
  line-height: 15px;
  color: #575757;
  white-space: nowrap;
}
```
